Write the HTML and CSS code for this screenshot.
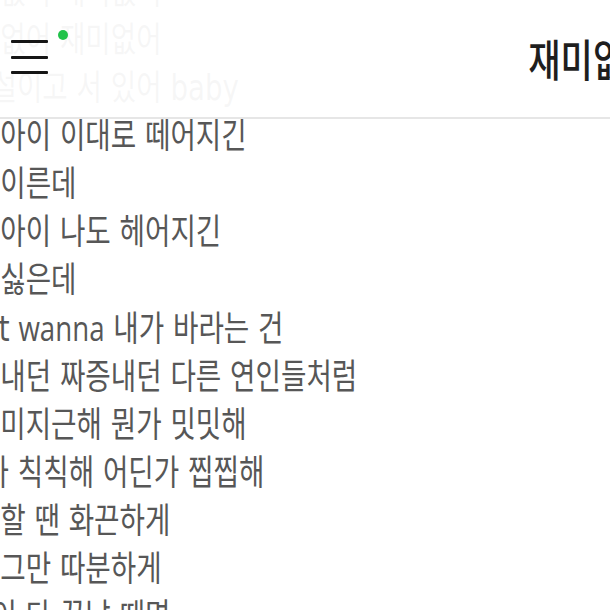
FILE: index.html
```html
<!DOCTYPE html>
<html lang="ko">
<head>
<meta charset="utf-8">
<title>재미없어</title>
<link rel="stylesheet" href="styles.css">
</head>
<body>
<main class="lyrics">
  <p class="line">이 없어 재미없어</p>
  <p class="line">이 없어 재미없어</p>
  <p class="line">망설이고 서 있어 baby</p>
  <p class="line">또 아이 이대로 떼어지긴</p>
  <p class="line">좀 이른데</p>
  <p class="line">난 아이 나도 헤어지긴</p>
  <p class="line">또 싫은데</p>
  <p class="line">in't <span class="en">wanna</span> 내가 바라는 건</p>
  <p class="line">화 내던 짜증내던 다른 연인들처럼</p>
  <p class="line">넘 미지근해 뭔가 밋밋해</p>
  <p class="line">&nbsp;&nbsp;가 칙칙해 어딘가 찝찝해</p>
  <p class="line">랑 할 땐 화끈하게</p>
  <p class="line">별 그만 따분하게</p>
  <p class="line">같이 다 끝날 때면</p>
</main>
<header class="topbar">
  <div class="menu">
    <span class="bar"></span>
    <span class="bar"></span>
    <span class="bar"></span>
    <span class="dot"></span>
  </div>
  <h1 class="title">재미없어</h1>
  <div class="spacer"></div>
</header>
</body>
</html>
```
FILE: styles.css
```css
html, body {
  margin: 0;
  padding: 0;
  background: #ffffff;
  overflow: hidden;
  width: 610px;
  height: 610px;
}

body {
  font-family: "DejaVu Sans", "Noto Sans CJK KR", sans-serif;
  position: relative;
}

.lyrics {
  margin: -32px 0 0 -34px;
  transform: scaleX(0.79);
  transform-origin: 0 0;
  width: 1000px;
}

.line {
  margin: 0;
  font-size: 35px;
  line-height: 48px;
  color: #575757;
  white-space: nowrap;
}

.en {
  font-family: "Open Sans", "DejaVu Sans", sans-serif;
}

.topbar {
  position: absolute;
  top: 0;
  left: 0;
  width: 1185px;
  height: 117px;
  border-bottom: 2px solid #e6e6e6;
  background: rgba(255, 255, 255, 0.95);
  display: grid;
  grid-template-columns: 1fr auto 1fr;
  align-items: center;
}

.menu {
  position: relative;
  align-self: start;
  margin: 40px 0 0 11px;
  width: 37px;
  display: flex;
  flex-direction: column;
  gap: 12.5px;
}

.bar {
  display: block;
  height: 3px;
  background: #151515;
  border-radius: 1px;
}

.dot {
  position: absolute;
  left: 47px;
  top: -10px;
  width: 10px;
  height: 10px;
  border-radius: 50%;
  background: #21c24a;
}

.title {
  margin: 0;
  font-family: "Noto Sans CJK KR", sans-serif;
  font-size: 44px;
  font-weight: 500;
  line-height: 1.2;
  color: #1e1e1e;
  transform: scaleX(0.8);
  white-space: nowrap;
}
```
